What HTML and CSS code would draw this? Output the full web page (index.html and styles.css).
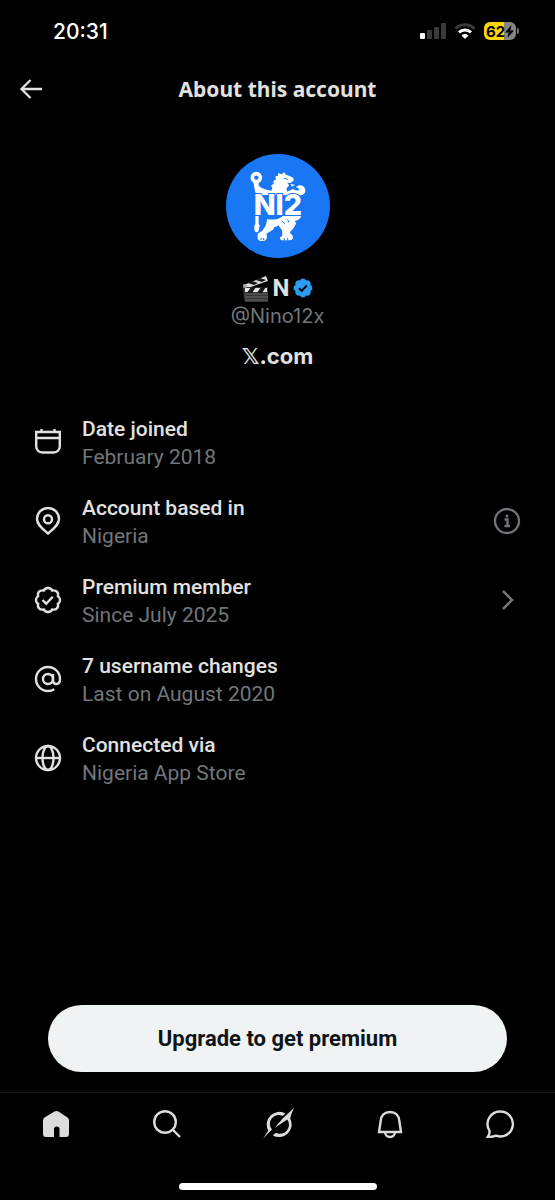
FILE: index.html
```html
<!DOCTYPE html>
<html lang="en">
<head>
    <meta charset="UTF-8">
    <meta name="viewport" content="width=device-width, initial-scale=1.0">
    <title>About this account</title>
    <link rel="stylesheet" href="styles.css">
</head>
<body>
    <div class="status-bar">
        <span class="time">20:31</span>
        <div class="status-icons">
            <svg width="26" height="16" viewBox="0 0 26 16" fill="#3a3a3a">
                <rect x="0" y="10" width="5" height="6" rx="1" fill="#fff"/>
                <rect x="7" y="7" width="5" height="9" rx="1"/>
                <rect x="14" y="4" width="5" height="12" rx="1"/>
                <rect x="21" y="0" width="5" height="16" rx="1"/>
            </svg>
            <svg width="22" height="16" viewBox="0 0 22 16" fill="none" stroke-width="3">
                <path d="M1.5 5.6a13.5 13.5 0 0 1 19 0" stroke="#3a3a3a"/>
                <path d="M5 9.4a8.5 8.5 0 0 1 12 0" stroke="#fff"/>
                <path d="M11 16l-3.4-3.5a4.8 4.8 0 0 1 6.8 0z" fill="#fff"/>
            </svg>
            <div class="battery">
                <div class="battery-body">
                    <span>62</span>
                    <svg width="9" height="13" viewBox="0 0 9 13"><path d="M6.5 0L0 7.4h3.6L2.4 13 9 5.4H5.4z" fill="#000"/></svg>
                </div>
                <div class="battery-tip"></div>
            </div>
        </div>
    </div>

    <header class="header">
        <button class="back" aria-label="Back">
            <svg width="24" height="20" viewBox="0 0 24 20" fill="none" stroke="#e1e1e1" stroke-width="2.3"><path d="M11.5 1L2.500 10l9 9M2.500 10H23"/></svg>
        </button>
        <h1>About this account</h1>
    </header>

    <main class="content">
        <section class="profile">
            <!-- Lion badge avatar -->
            <svg class="avatar" viewBox="31 27 312 312">
                <circle cx="187" cy="183" r="156" fill="#1976f5"/>
                <g fill="#fff">
                    <circle cx="122" cy="98" r="12" fill="none" stroke="#fff" stroke-width="11"/>
                    <path d="M113 112h15l2 12q20 14 38 12v14h-46l-4-12z"/>
                    <path d="M164 150l6-22-4-6 8-6-1-8 8-5-2-9 8-2v-8l11 4 7-6 6 7q11 3 21 9l3 8-7 6-4 2-10-1q8 7 5 11l-7 6 3 10-7 10z"/>
                    <path d="M224 117l14 2-9 6z"/>
                    <path d="M240 127q10-10 22-4 10 8 6 20-6 8-16 8h-46l8-11 18-8q14 8 18 2 0-6-10-7z"/>
                    <path d="M119 213h10v24l3 4-2 14-4 7h-6l-4-6v-14l3-5z"/>
                    <path d="M155 222q28 6 48-10h54q-3 12-19 16l3 8-9 16-10 10 9 10 1 8q-2 6-10 6h-26l-4-8 8-6-1-16-11-15q-6 6-12 5l-4 8-20 12 2 8-2 9-6 5h-14l-6-6v-16l14-9 10-15z"/>
                </g>
                <path d="M205 100l12 3M198 228l10 8M216 224l4 8M136 279v7M144 279v7M206 279v7M216 279v7" stroke="#1976f5" fill="none" stroke-width="3"/>
                <text class="badge-text" x="114" y="210">NI2</text>
            </svg>
            <div class="name">
                <svg width="27" height="27" viewBox="0 0 27 27">
                    <path d="M2 10L24 1l2 5L3 14z" fill="#ddd"/>
                    <path d="M6 8l6 2 4-2-6-2zM14 5l6 2 4-2-6-2z" fill="#171717"/>
                    <path d="M1 12h25v15H3q-2-7-2-15z" fill="#353535"/>
                    <path d="M3 13h22v4H3z" fill="#e5e5e5"/>
                    <path d="M9 12l-4 6h5l4-6zM19 12l-4 6h5l4-6z" fill="#171717"/>
                    <path d="M3 19h23M3 22h23M3 25h23" stroke="#666"/>
                    <circle cx="3" cy="11" r="2" fill="#aaa"/>
                </svg>
                <span>N</span>
                <svg class="verified" width="20" height="20" viewBox="1 1 20 20">
                    <path d="M20.4 11c0-1.300-.8-2.500-1.900-3.100.4-1.300.1-2.700-.8-3.600s-2.300-1.200-3.600-.8C13.500 2.300 12.300 1.500 11 1.500s-2.500.8-3.100 2c-1.300-.4-2.700-.1-3.600.8s-1.200 2.300-.8 3.600C2.300 8.500 1.500 9.700 1.500 11s.8 2.500 2 3.100c-.4 1.300-.1 2.700.8 3.600s2.300 1.200 3.600.8c.6 1.200 1.800 2 3.100 2s2.500-.8 3.100-2c1.300.4 2.700.1 3.600-.8s1.200-2.300.8-3.600c1.100-.6 1.900-1.800 1.900-3.100z" fill="#2b9cf0"/>
                    <path d="M7 11.300l2.800 2.700 5-5.500" fill="none" stroke="#000" stroke-width="1.900"/>
                </svg>
            </div>
            <div class="handle">@Nino12x</div>
            <div class="site"><span class="x-mark">𝕏</span>.com</div>
        </section>

        <ul class="details">
            <li>
                <svg class="icon" viewBox="0 0 28 28"><path d="M2.200 4h23.600v14.500a6 6 0 0 1-6 6H8.200a6 6 0 0 1-6-6zM2 10h24M7.500 1V4M20.500 1V4"/></svg>
                <div class="text">
                    <strong>Date joined</strong>
                    <span>February 2018</span>
                </div>
            </li>
            <li>
                <svg class="icon" viewBox="0 0 28 28"><path d="M14 26.500C9 22 3 18 3 12a11 11 0 0 1 22 0c0 6-6 10-11 14.500z"/><circle cx="14" cy="12.300" r="4"/></svg>
                <div class="text">
                    <strong>Account based in</strong>
                    <span>Nigeria</span>
                </div>
                <button class="row-action" aria-label="More information">
                    <svg width="28" height="28" viewBox="0 0 28 28" fill="none" stroke="#71767b" stroke-width="2.300"><circle cx="14" cy="14" r="12"/><path d="M11.500 12.500h3v7M11.500 19h5.500"/><circle cx="14" cy="9" r="1.500" fill="#71767b" stroke="none"/></svg>
                </button>
            </li>
            <li>
                <svg class="icon" viewBox="0 0 28 28"><path d="M14 2c2 0 3.400 1 4.300 2.600 1.800-.5 3.400-.1 4.600 1.100s1.500 2.700 1 4.500C25.300 11 26 12.300 26 14s-.7 3-2.100 3.800c.5 1.800.2 3.300-1 4.500s-2.800 1.600-4.600 1.100C17.400 25 16 26 14 26s-3.400-1-4.300-2.600c-1.800.5-3.400.1-4.600-1.100s-1.500-2.700-1-4.500C2.700 17 2 15.700 2 14s.7-3 2.100-3.800c-.5-1.800-.2-3.300 1-4.500s2.800-1.600 4.600-1.100C10.600 3 12 2 14 2z"/><path d="M8.500 14l3.700 3.700 6.500-7"/></svg>
                <div class="text">
                    <strong>Premium member</strong>
                    <span>Since July 2025</span>
                </div>
                <button class="row-action" aria-label="Premium details">
                    <svg width="28" height="28" viewBox="0 0 28 28" fill="none" stroke="#71767b" stroke-width="2.600"><path d="M10 5l9 9-9 9"/></svg>
                </button>
            </li>
            <li>
                <svg class="icon" viewBox="0 0 28 28"><circle cx="14" cy="14" r="5"/><path d="M19 9v6c0 2.500 1.200 4 3.200 4 2.400 0 3.800-2 3.800-5A12 12 0 1 0 14 26c2.600 0 4.600-.6 6.300-1.800"/></svg>
                <div class="text">
                    <strong>7 username changes</strong>
                    <span>Last on August 2020</span>
                </div>
            </li>
            <li>
                <svg class="icon" viewBox="0 0 28 28"><circle cx="14" cy="14" r="12"/><ellipse cx="14" cy="14" rx="5.500" ry="12"/><path d="M2 14h24"/></svg>
                <div class="text">
                    <strong>Connected via</strong>
                    <span>Nigeria App Store</span>
                </div>
            </li>
        </ul>

        <button class="btn-upgrade">Upgrade to get premium</button>
    </main>

    <nav class="tab-bar">
        <a href="#" aria-label="Home">
            <svg viewBox="0 0 32 32"><path d="M14.500 3.500q2-1 4 0l9 6Q29 10.500 29 12.500V26q0 3-3 3h-6.500v-8q0-2.500-2.700-2.500T14 21v8H6q-3 0-3-3V12.500q0-2 1.500-3z" fill="#dcdcdc" stroke="none"/></svg>
        </a>
        <a href="#" aria-label="Search">
            <svg viewBox="0 0 32 32"><circle cx="14" cy="14" r="10.800"/><path d="M21.500 21.500l7.500 7.500"/></svg>
        </a>
        <a href="#" aria-label="Grok">
            <svg viewBox="0 0 32 32"><path d="M23.500 5.400A12.700 12.700 0 0 0 6.200 22.500Q4 26 1 31q4-5 9-9.500A8.700 8.700 0 0 1 20.500 8zM10.800 27.500A12.700 12.700 0 0 0 28.200 10.500Q29 6 32 0 21 9 12.500 20L25.300 11.500A9 9 0 0 1 13.800 24.700z" fill="#dcdcdc" stroke="none"/></svg>
        </a>
        <a href="#" aria-label="Notifications">
            <svg viewBox="0 0 32 32"><path d="M17 4c-5.500 0-9 3.500-9.300 9L6 24h22l-1.700-11C26 7.500 22.500 4 17 4zM12 24a5 5 0 0 0 10 0"/></svg>
        </a>
        <a href="#" aria-label="Messages">
            <svg viewBox="0 0 32 32"><path d="M16.500 3.500A12.500 12.500 0 1 1 12 27.700c-2 .8-5 1.600-8.200 1 1.500-1.700 2-4 1.600-6.200A12.500 12.500 0 0 1 16.500 3.500z"/></svg>
        </a>
    </nav>
    <div class="home-indicator"></div>
</body>
</html>
```

FILE: styles.css
```css
* {
    box-sizing: border-box;
}
body {
    font-family: Roboto, "Noto Sans", sans-serif;
    background-color: #000;
    color: #e1e1e1;
    display: flex;
    flex-direction: column;
    min-height: 100vh;
    margin: 0;
}
button {
    font-family: inherit;
    background: none;
    border: none;
    padding: 0;
    cursor: pointer;
}
svg {
    display: block;
    flex-shrink: 0;
}

/* Status bar */
.status-bar {
    display: flex;
    justify-content: space-between;
    align-items: center;
    height: 62px;
    padding: 0 36px 0 53px;
}
.time {
    font-family: Inter, sans-serif;
    font-size: 21px;
    font-weight: 500;
    color: #fff;
}
.status-icons {
    display: flex;
    align-items: center;
    gap: 8px;
}
.battery {
    display: flex;
    align-items: center;
    gap: 1px;
}
.battery-body {
    display: flex;
    align-items: center;
    justify-content: center;
    width: 32px;
    height: 18px;
    border-radius: 6px;
    background: linear-gradient(to right, #fdd60a 64%, #858585 64%);
    font-family: Inter, sans-serif;
    font-size: 15px;
    font-weight: 700;
    color: #000;
}
.battery-tip {
    width: 2px;
    height: 6px;
    border-radius: 0 2px 2px 0;
    background-color: #777;
}

/* Header */
.header {
    display: grid;
    grid-template-columns: 48px 1fr 48px;
    align-items: center;
    height: 54px;
    padding: 0 19px;
}
.header h1 {
    font-family: "Noto Sans", sans-serif;
    margin: 0;
    font-size: 21px;
    font-weight: 700;
    text-align: center;
}

.content {
    display: flex;
    flex-direction: column;
    flex: 1;
    padding: 38px 34px 20px;
}

/* Profile */
.profile {
    display: flex;
    flex-direction: column;
    align-items: center;
}
.avatar {
    width: 104px;
    height: 104px;
    margin-bottom: 16px;
}
.badge-text {
    font-family: Inter, sans-serif;
    font-size: 86px;
    font-weight: 800;
    fill: #fff;
    stroke: #1976f5;
    stroke-width: 6px;
    paint-order: stroke;
}
.name {
    display: flex;
    align-items: center;
    gap: 4px;
    font-size: 24px;
    font-weight: 700;
    line-height: 28px;
}
.handle {
    font-family: Inter, sans-serif;
    font-size: 20px;
    line-height: 28px;
    color: #71767b;
}
.site {
    margin-top: 12px;
    font-family: Inter, sans-serif;
    font-size: 22px;
    font-weight: 700;
    line-height: 28px;
}
.x-mark {
    font-family: "DejaVu Sans", sans-serif;
}

/* Account details */
.details {
    list-style: none;
    margin: 44px 0 0;
    padding: 0;
    display: flex;
    flex-direction: column;
    gap: 23px;
}
.details li {
    display: flex;
    align-items: center;
    gap: 20px;
}
.icon,
.row-action {
    margin-bottom: 2px;
}
.icon {
    width: 28px;
    height: 28px;
    fill: none;
    stroke: #e1e1e1;
    stroke-width: 2.4px;
}
.text {
    display: flex;
    flex-direction: column;
    flex: 1;
    font-size: 21px;
    line-height: 28px;
}
.text strong {
    font-weight: 500;
}
.text span {
    color: #71767b;
}

.btn-upgrade {
    height: 67px;
    margin: auto 14px 0;
    border-radius: 34px;
    background-color: #eff3f4;
    color: #0f1419;
    font-size: 22px;
    font-weight: 700;
}

/* Bottom navigation */
.tab-bar {
    display: grid;
    grid-template-columns: repeat(5, 1fr);
    justify-items: center;
    align-items: center;
    height: 62px;
    border-top: 1px solid #1c1c1c;
}
.tab-bar svg {
    width: 32px;
    height: 32px;
    fill: none;
    stroke: #dcdcdc;
    stroke-width: 2.4px;
}
.home-indicator {
    width: 198px;
    height: 7px;
    margin: 29px auto 10px;
    border-radius: 4px;
    background-color: #fff;
}
```
